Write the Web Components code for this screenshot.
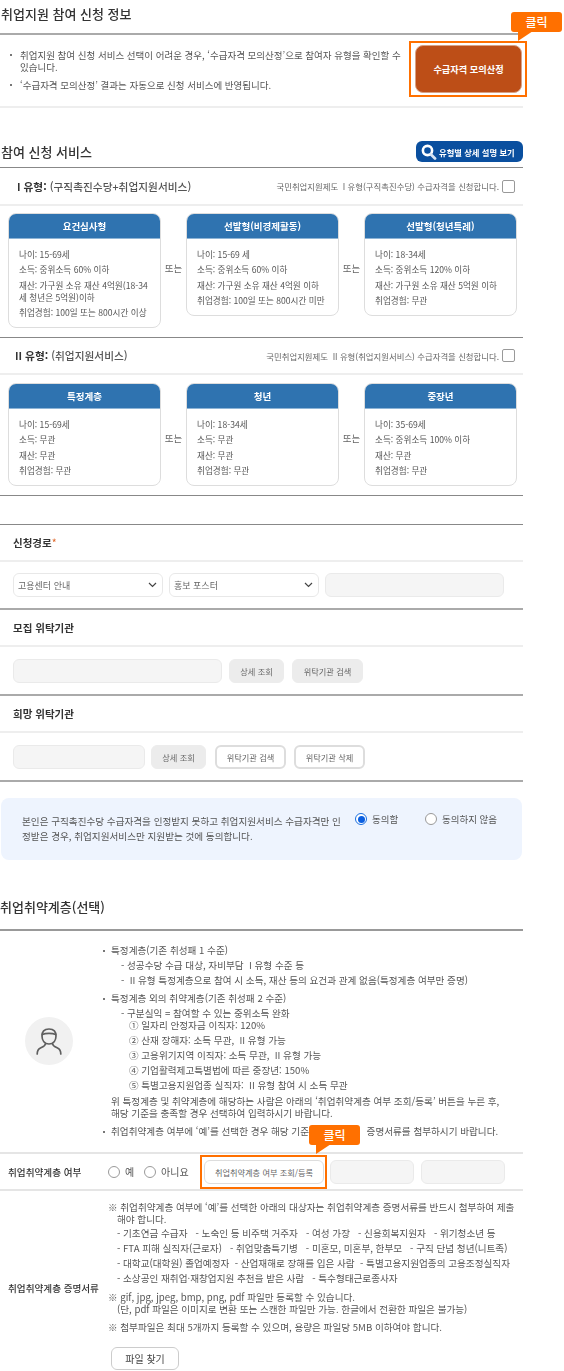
<!DOCTYPE html>
<html lang="ko">
<head>
<meta charset="utf-8">
<title>취업지원 신청</title>
<style>
  html, body { margin: 0; padding: 0; background: #fff; }
  body { width: 564px; height: 1371px; overflow: hidden; font-family: "Noto Sans CJK KR", "Noto Sans", sans-serif; color: #444; }
</style>
</head>
<body>
<apply-page>
  <sec-title style="--h:26px;--pb:7px;--line:2px solid #aaa;--pl:1px">취업지원 참여 신청 정보</sec-title>
  <info-panel>
    <li-line>취업지원 참여 신청 서비스 선택이 어려운 경우, ‘수급자격 모의산정’으로 참여자 유형을 확인할 수<br>있습니다.</li-line>
    <li-line style="margin-top:6px">‘수급자격 모의산정’ 결과는 자동으로 신청 서비스에 반영됩니다.</li-line>
    <click-frame slot="action" style="--fx:-6px;--fy:-4px;--fr:-5px;--fb:-4px">
      <calc-button>수급자격 모의산정</calc-button>
      <click-tag style="--x:96px;--y:-33px">클릭</click-tag>
    </click-frame>
  </info-panel>

  <sec-title style="--h:31px;--pb:0px;--line:1px solid #888;--pl:1px;margin-top:28px">
    참여 신청 서비스
    <detail-link slot="side">유형별 상세 설명 보기</detail-link>
  </sec-title>

  <type-row style="--pl:17px">
    <b>I 유형:</b> (구직촉진수당+취업지원서비스)
    <span slot="agree">국민취업지원제도 &nbsp;I 유형(구직촉진수당) 수급자격을 신청합니다.</span>
  </type-row>
  <card-row style="margin-top:7px">
    <svc-card><span slot="heading">요건심사형</span>
      <p>나이: 15-69세</p><p>소득: 중위소득 60% 이하</p><p>재산: 가구원 소유 재산 4억원(18-34<br>세 청년은 5억원)이하</p><p>취업경험: 100일 또는 800시간 이상</p></svc-card>
    <or-mark></or-mark>
    <svc-card><span slot="heading">선발형(비경제활동)</span>
      <p>나이: 15-69 세</p><p>소득: 중위소득 60% 이하</p><p>재산: 가구원 소유 재산 4억원 이하</p><p>취업경험: 100일 또는 800시간 미만</p></svc-card>
    <or-mark></or-mark>
    <svc-card><span slot="heading">선발형(청년특례)</span>
      <p>나이: 18-34세</p><p>소득: 중위소득 120% 이하</p><p>재산: 가구원 소유 재산 5억원 이하</p><p>취업경험: 무관</p></svc-card>
  </card-row>
  <plain-rule style="margin-top:9px"></plain-rule>

  <type-row style="--rh:35px;--pl:15px">
    <b>II 유형:</b> (취업지원서비스)
    <span slot="agree">국민취업지원제도 &nbsp;II 유형(취업지원서비스) 수급자격을 신청합니다.</span>
  </type-row>
  <card-row style="margin-top:8px">
    <svc-card><span slot="heading">특정계층</span>
      <p>나이: 15-69세</p><p>소득: 무관</p><p>재산: 무관</p><p>취업경험: 무관</p></svc-card>
    <or-mark></or-mark>
    <svc-card><span slot="heading">청년</span>
      <p>나이: 18-34세</p><p>소득: 무관</p><p>재산: 무관</p><p>취업경험: 무관</p></svc-card>
    <or-mark></or-mark>
    <svc-card><span slot="heading">중장년</span>
      <p>나이: 35-69세</p><p>소득: 중위소득 100% 이하</p><p>재산: 무관</p><p>취업경험: 무관</p></svc-card>
  </card-row>
  <plain-rule style="margin-top:9px"></plain-rule>

  <form-block style="margin-top:28px;--top:1px solid #888">
    <span slot="label">신청경로<em style="color:#e0692c;font-style:normal;font-weight:400">*</em></span>
    <ui-select style="width:150px">고용센터 안내</ui-select>
    <ui-select style="width:150px">홍보 포스터</ui-select>
    <ui-input style="width:179px"></ui-input>
  </form-block>
  <form-block style="--ch:47px">
    <span slot="label">모집 위탁기관</span>
    <ui-input style="width:209px"></ui-input>
    <ui-btn style="width:55px;margin-left:1px;--bg:#ececec;--bd:#ececec">상세 조회</ui-btn>
    <ui-btn style="width:71px;margin-left:2px;--bg:#ececec;--bd:#ececec">위탁기관 검색</ui-btn>
  </form-block>
  <form-block style="--ch:47px;--bottom:2px solid #aaa">
    <span slot="label">희망 위탁기관</span>
    <ui-input style="width:132px"></ui-input>
    <ui-btn style="width:55px;--bg:#ececec;--bd:#ececec">상세 조회</ui-btn>
    <ui-btn style="width:71px;margin-left:3px;--bw:2px">위탁기관 검색</ui-btn>
    <ui-btn style="width:71px;margin-left:2px;--bw:2px">위탁기관 삭제</ui-btn>
  </form-block>

  <consent-box>본인은 구직촉진수당 수급자격을 인정받지 못하고 취업지원서비스 수급자격만 인<br>정받은 경우, 취업지원서비스만 지원받는 것에 동의합니다.</consent-box>

  <sec-title style="--h:32px;--pb:7px;--line:2px solid #999;--pl:0px;margin-top:30px">취업취약계층(선택)</sec-title>
  <vuln-guide></vuln-guide>
  <vuln-row></vuln-row>
  <doc-row></doc-row>
</apply-page>

<script>
// small helper, every element here is only a shadow root with fixed markup
function component(name, html) {
  customElements.define(name, class extends HTMLElement {
    constructor() {
      super();
      this.attachShadow({ mode: "open" }).innerHTML = html;
    }
  });
}

// the reference is a soft, upscaled capture, hence the tiny blur
component("apply-page", `
  <style>:host { display:block; width:523px; filter:blur(.3px); }</style>
  <slot></slot>`);

component("sec-title", `
  <style>
    :host { display:block; padding-bottom:var(--pb); border-bottom:var(--line); }
    .row { height:var(--h); display:flex; align-items:center; justify-content:space-between; padding-left:var(--pl);
           font-size:13px; font-weight:500; color:#333; white-space:nowrap; }
  </style>
  <div class="row"><span><slot></slot></span><slot name="side"></slot></div>`);

component("info-panel", `
  <style>
    :host { display:flex; justify-content:space-between; height:71px; border-bottom:2px solid #eee; }
    .list { padding:14px 0 0 10px; }
    .act { padding:10px 1px 0 0; }
  </style>
  <div class="list"><slot></slot></div>
  <div class="act"><slot name="action"></slot></div>`);

component("li-line", `
  <style>
    :host { display:block; position:relative; padding-left:10px; font-size:9.5px; line-height:12px; color:#555; white-space:nowrap; }
    :host::before { content:""; position:absolute; left:0; top:5px; width:2px; height:2px; background:#777; }
  </style>
  <slot></slot>`);

component("click-frame", `
  <style>
    :host { display:block; position:relative; }
    .frame { position:absolute; left:var(--fx); top:var(--fy); right:var(--fr); bottom:var(--fb); border:2px solid #ff7000; pointer-events:none; }
  </style>
  <slot></slot><div class="frame"></div>`);

component("click-tag", `
  <style>
    :host { display:block; position:absolute; left:var(--x); top:var(--y); width:51px; height:20px; z-index:3;
            background:#ff7000; border-radius:3px; color:#fff; font-size:12px; font-weight:500; line-height:20px; text-align:center; }
    svg { position:absolute; left:5px; top:19px; }
  </style>
  <slot></slot><svg width="20" height="11" viewBox="0 0 20 11"><path d="M2 0 L2 10 L17 0 Z" fill="#ff7000"/></svg>`);

component("calc-button", `
  <style>
    :host { display:flex; align-items:center; justify-content:center; width:107px; height:48px; box-sizing:border-box;
            background:#bd4e17; border:1px solid #d9a184; border-radius:8px; color:#fff; font-size:9.2px; font-weight:700; white-space:nowrap; }
  </style>
  <slot></slot>`);

component("detail-link", `
  <style>
    :host { display:flex; align-items:center; gap:2px; width:107px; height:21px; box-sizing:border-box; padding-left:5px;
            background:#0a4f9f; border-radius:6px; color:#fff; font-size:8.3px; font-weight:700; white-space:nowrap; }
  </style>
  <svg width="16" height="16" viewBox="0 0 16 16"><circle cx="6.5" cy="6.5" r="4.6" fill="none" stroke="#fff" stroke-width="2.6"/><path d="M10 10.5 L14 14.5" stroke="#d6e4f5" stroke-width="2.8" stroke-linecap="round"/></svg>
  <slot></slot>`);

component("type-row", `
  <style>
    :host { display:flex; align-items:center; justify-content:space-between; height:var(--rh, 36px); padding:0 8px 0 var(--pl); border-bottom:2px solid #eee; white-space:nowrap; }
    .name { font-size:10.7px; font-weight:500; color:#555; }
    ::slotted(b) { color:#333; font-weight:700; }
    .agree { display:flex; align-items:center; gap:3px; font-size:8.4px; color:#666; }
    i { width:11px; height:11px; border:1px solid #999; border-radius:2px; background:#fff; display:block; }
  </style>
  <span class="name"><slot></slot></span>
  <span class="agree"><slot name="agree"></slot><i></i></span>`);

component("card-row", `
  <style>:host { display:flex; align-items:flex-start; padding-left:8px; }</style>
  <slot></slot>`);

component("svc-card", `
  <style>
    :host { display:block; width:153px; box-sizing:border-box; border:1px solid #ddd; border-radius:8px; overflow:hidden; background:#fff; }
    .head { height:25px; background:#2f73b0; color:#fff; font-size:9.5px; font-weight:700; line-height:25px; text-align:center; border-bottom:1px solid #8db4d6; box-sizing:border-box; }
    .body { padding:7px 10px 7px 10px; }
    ::slotted(p) { margin:0; padding:1.75px 0; font-size:8.6px; line-height:12px; color:#555; white-space:nowrap; }
  </style>
  <div class="head"><slot name="heading"></slot></div>
  <div class="body"><slot></slot></div>`);

component("or-mark", `
  <style>:host { display:block; width:25px; padding-top:47px; text-align:center; font-size:9.5px; line-height:16px; color:#666; white-space:nowrap; }</style>
  또는`);

component("plain-rule", `
  <style>:host { display:block; height:1px; background:#888; }</style>`);

component("form-block", `
  <style>
    :host { display:block; border-top:var(--top, 2px solid #aaa); border-bottom:var(--bottom, 0); }
    .label { height:35px; padding-left:13px; display:flex; align-items:center; font-size:10.5px; font-weight:700; color:#333; border-bottom:2px solid #eee; }
    .ctl { height:var(--ch, 46px); padding:0 13px; display:flex; align-items:center; gap:6px; }
  </style>
  <div class="label"><slot name="label"></slot></div>
  <div class="ctl"><slot></slot></div>`);

component("ui-select", `
  <style>
    :host { display:flex; align-items:center; justify-content:space-between; height:24px; box-sizing:border-box; padding:0 5px 0 4px;
            border:1px solid #e8e8e8; border-radius:6px; font-size:9px; color:#666; white-space:nowrap; }
  </style>
  <span><slot></slot></span>
  <svg width="9" height="6" viewBox="0 0 9 6"><path d="M1 1 L4.5 4.5 L8 1" fill="none" stroke="#444" stroke-width="1.2"/></svg>`);

component("ui-input", `
  <style>:host { display:block; height:24px; box-sizing:border-box; background:#f5f5f5; border:1px solid #eaeaea; border-radius:6px; }</style>`);

component("ui-btn", `
  <style>
    :host { display:flex; align-items:center; justify-content:center; height:24px; box-sizing:border-box;
            background:var(--bg, #fff); border:var(--bw, 1px) solid var(--bd, #ddd); border-radius:6px; font-size:8.2px; color:#666; white-space:nowrap; }
  </style>
  <slot></slot>`);

component("radio-mark", `
  <style>
    :host { display:block; flex:none; width:12px; height:12px; box-sizing:border-box; border:1px solid #999; border-radius:50%; background:#fff; position:relative; }
    :host([on]) { border-color:#1a6fe0; }
    :host([on])::after { content:""; position:absolute; inset:1.5px; border-radius:50%; background:#0b5fe0; }
  </style>`);

component("consent-box", `
  <style>
    :host { display:flex; margin:16px 0 0 1px; width:521px; height:62px; box-sizing:border-box; padding:16px 0 0 21px; background:#eef4fe; border-radius:8px; }
    .txt { width:333px; flex:none; font-size:9.6px; line-height:15px; color:#555; white-space:nowrap; }
    .opt { display:flex; align-items:center; height:14px; margin-top:-2px; gap:5px; font-size:9.5px; color:#555; white-space:nowrap; }
  </style>
  <div class="txt"><slot></slot></div>
  <div class="opt"><radio-mark on></radio-mark><span style="width:48px">동의함</span><radio-mark></radio-mark><span>동의하지 않음</span></div>`);

component("vuln-guide", `
  <style>
    :host { display:flex; height:221px; box-sizing:border-box; }
    .ava { width:48px; height:48px; margin:86px 0 0 25px; flex:none; border-radius:50%; background:#f1f1f1; display:flex; align-items:center; justify-content:center; }
    .list { margin-left:30px; padding-top:11.5px; font-size:9.6px; line-height:15px; color:#555; white-space:nowrap; }
    .t { position:relative; padding-left:8px; }
    .t::before { content:""; position:absolute; left:0; top:7px; width:2px; height:2px; background:#777; }
    .s { padding-left:18px; }
    .n { padding-left:26px; }
    .p { padding-left:8px; }
  </style>
  <div class="ava">
    <svg width="26" height="27" viewBox="0 0 26 27" fill="none" stroke="#5f5f5f" stroke-width="1.7" stroke-linecap="round">
      <path d="M13 1 C8 1 6 3.5 6 8 C6 12.5 8.5 16 13 16 C17.5 16 20 12.5 20 8 C20 3.5 18 1 13 1 Z"/>
      <path d="M6.3 6.5 C9.5 5 16.5 5 19.7 6.5"/>
      <path d="M9.5 15.5 C9.5 18 7 18.8 4.5 20 C2 21.2 1.2 23 1.2 26"/>
      <path d="M16.5 15.5 C16.5 18 19 18.8 21.5 20 C24 21.2 24.8 23 24.8 26"/>
    </svg>
  </div>
  <div class="list">
    <div class="t">특정계층(기존 취성패 1 수준)</div>
    <div class="s">- 성공수당 수급 대상, 자비부담 &nbsp;I 유형 수준 등</div>
    <div class="s">- &nbsp;II 유형 특정계층으로 참여 시 소득, 재산 등의 요건과 관계 없음(특정계층 여부만 증명)</div>
    <div class="t" style="margin-top:3px">특정계층 외의 취약계층(기존 취성패 2 수준)</div>
    <div class="s">- 구분실익 = 참여할 수 있는 중위소득 완화</div>
    <div class="n" style="margin-top:-3px">① 일자리 안정자금 이직자: 120%</div>
    <div class="n">② 산재 장해자: 소득 무관, &nbsp;II 유형 가능</div>
    <div class="n">③ 고용위기지역 이직자: 소득 무관, &nbsp;II 유형 가능</div>
    <div class="n">④ 기업활력제고특별법에 따른 중장년: 150%</div>
    <div class="n">⑤ 특별고용지원업종 실직자: &nbsp;II 유형 참여 시 소득 무관</div>
    <div class="p" style="margin-top:1px">위 특정계층 및 취약계층에 해당하는 사람은 아래의 ‘취업취약계층 여부 조회/등록’ 버튼을 누른 후,</div>
    <div class="p" style="margin-top:-3px">해당 기준을 충족할 경우 선택하여 입력하시기 바랍니다.</div>
    <div class="t" style="margin-top:3px">취업취약계층 여부에 ‘예’를 선택한 경우 해당 기준을 충족하는 &nbsp; &nbsp;증명서류를 첨부하시기 바랍니다.</div>
  </div>`);

component("vuln-row", `
  <style>
    :host { display:flex; align-items:center; height:35px; border-top:2px solid #e5e5e5; border-bottom:2px solid #e5e5e5; white-space:nowrap; font-size:10px; color:#555; }
    .lab { width:100px; padding-left:8px; font-size:9.6px; font-weight:500; color:#333; }
    .opts { display:flex; align-items:center; gap:5px; width:92px; }
    .box { display:flex; gap:7px; }
    ui-btn { width:120px; }
    ui-input { width:84px; }
  </style>
  <span class="lab">취업취약계층 여부</span>
  <span class="opts"><radio-mark></radio-mark><span style="width:9px;margin-right:5px">예</span><radio-mark></radio-mark><span>아니요</span></span>
  <div class="box">
    <click-frame style="--fx:-4px;--fy:-5px;--fr:-3px;--fb:-5px;margin:0 -1px 0 4px">
      <ui-btn>취업취약계층 여부 조회/등록</ui-btn>
      <click-tag style="--x:105px;--y:-35px">클릭</click-tag>
    </click-frame>
    <ui-input></ui-input><ui-input></ui-input>
  </div>`);

component("doc-row", `
  <style>
    :host { display:flex; white-space:nowrap; font-size:9.6px; line-height:15px; color:#555; }
    .lab { width:100px; padding:90px 0 0 8px; color:#333; font-weight:500; }
    .notes { padding-top:9px; }
    .i { padding-left:9px; }
    .file { display:flex; align-items:center; justify-content:center; width:68px; height:23px; box-sizing:border-box; margin:12px 0 0 3px;
            border:1px solid #ccc; border-radius:6px; font-size:10px; color:#444; }
  </style>
  <div class="lab">취업취약계층 증명서류</div>
  <div class="notes">
    <div>※ 취업취약계층 여부에 ‘예’를 선택한 아래의 대상자는 취업취약계층 증명서류를 반드시 첨부하여 제출</div>
    <div class="i" style="margin-top:-3px">해야 합니다.</div>
    <div class="i" style="margin-top:-1px">- 기초연금 수급자 &nbsp; - 노숙인 등 비주택 거주자 &nbsp; - 여성 가장 &nbsp; - 신용회복지원자 &nbsp; - 위기청소년 등</div>
    <div class="i">- FTA 피해 실직자(근로자) &nbsp; - 취업맞춤특기병 &nbsp; - 미혼모, 미혼부, 한부모 &nbsp; - 구직 단념 청년(니트족)</div>
    <div class="i">- 대학교(대학원) 졸업예정자 &nbsp;- 산업재해로 장해를 입은 사람 &nbsp;- 특별고용지원업종의 고용조정실직자</div>
    <div class="i">- 소상공인 재취업·재창업지원 추천을 받은 사람 &nbsp; - 특수형태근로종사자</div>
    <div style="margin-top:4px">※ gif, jpg, jpeg, bmp, png, pdf 파일만 등록할 수 있습니다.</div>
    <div class="i" style="margin-top:-3px">(단, pdf 파일은 이미지로 변환 또는 스캔한 파일만 가능. 한글에서 전환한 파일은 불가능)</div>
    <div style="margin-top:3px">※ 첨부파일은 최대 5개까지 등록할 수 있으며, 용량은 파일당 5MB 이하여야 합니다.</div>
    <div class="file">파일 찾기</div>
  </div>`);
</script>
</body>
</html>
